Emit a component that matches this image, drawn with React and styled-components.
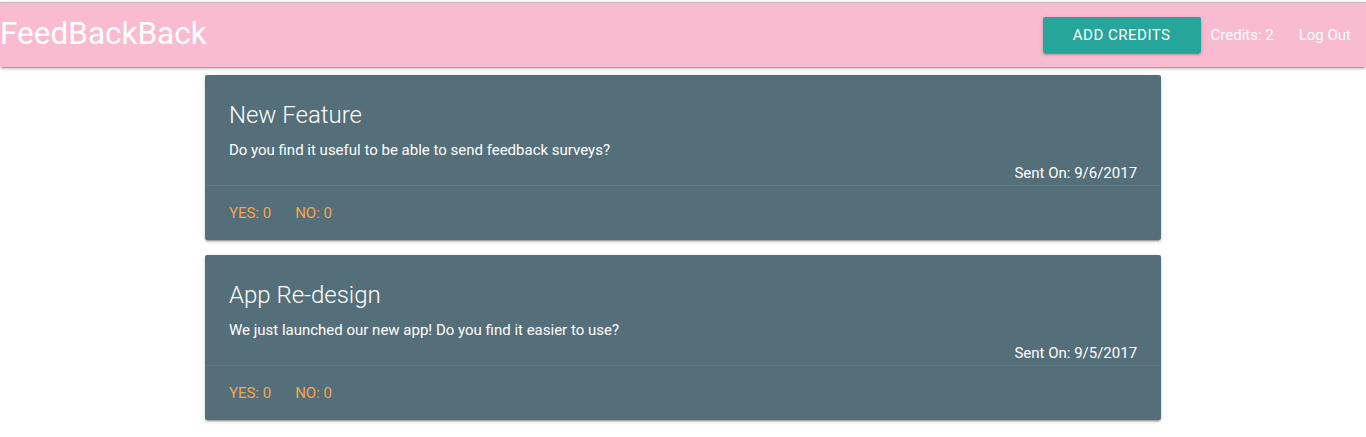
import styled, { createGlobalStyle } from 'styled-components';

const GlobalStyle = createGlobalStyle`
  html { font-size: 15px; }
  body {
    margin: 0;
    padding-top: 2px;
    background: #fff;
    font-family: Roboto, "Liberation Sans", sans-serif;
    font-weight: 400;
    line-height: 1.5;
    color: rgba(0, 0, 0, 0.87);
  }
  * { box-sizing: border-box; }
`;

const Nav = styled.nav`
  height: 65px;
  background: #f8bbd0;
  border-top: 1px solid #c4b3b9;
  box-shadow: 0 2px 2px 0 rgba(0,0,0,0.14), 0 1px 5px 0 rgba(0,0,0,0.12), 0 3px 1px -2px rgba(0,0,0,0.2);
  display: flex;
  align-items: center;
  justify-content: space-between;
  color: #fff;
`;

const Brand = styled.a`
  font-size: 31.5px;
  line-height: 64px;
  color: #fff;
  text-decoration: none;
  margin-top: -2px;
`;

const Menu = styled.ul`
  display: flex;
  align-items: center;
  list-style: none;
  margin: 0;
  padding: 0;
  height: 64px;
`;

const Item = styled.li`
  margin: ${p => p.$margin || '0'};
  font-size: 15px;
  color: #fff;
`;

const NavLink = styled.a`
  display: block;
  padding: 0 15px;
  color: #fff;
  text-decoration: none;
`;

const Button = styled.button`
  height: 36px;
  line-height: 36px;
  padding: 0 30px;
  border: none;
  border-radius: 2px;
  background: #26a69a;
  color: #fff;
  font-family: inherit;
  font-size: 15px;
  letter-spacing: 0.5px;
  text-transform: uppercase;
  box-shadow: 0 2px 2px 0 rgba(0,0,0,0.14), 0 1px 5px 0 rgba(0,0,0,0.12), 0 3px 1px -2px rgba(0,0,0,0.2);
  cursor: pointer;
`;

const Container = styled.div`
  width: 70%;
  margin: 0 auto;
`;

const Card = styled.div`
  background: #546e7a;
  color: #fff;
  margin: 8px 0 15px;
  border-radius: 2px;
  box-shadow: 0 2px 2px 0 rgba(0,0,0,0.14), 0 1px 5px 0 rgba(0,0,0,0.12), 0 3px 1px -2px rgba(0,0,0,0.2);
`;

const Content = styled.div`
  padding: 24px 24px 23.5px;
`;

const Title = styled.span`
  display: block;
  font-size: 24px;
  font-weight: 300;
  line-height: 32px;
  margin-bottom: 8px;
`;

const Text = styled.p`
  margin: 0;
  font-size: 15px;
  line-height: 22.5px;
`;

const Sent = styled.p`
  margin: 0;
  float: right;
  font-size: 15px;
  line-height: 22.5px;
`;

const Action = styled.div`
  border-top: 1px solid rgba(160, 160, 160, 0.2);
  padding: 16px 24px;
  display: flex;
  gap: 24px;
  line-height: 22px;
`;

const Count = styled.a`
  color: #f6a54c;
  text-transform: uppercase;
  font-size: 15px;
  text-decoration: none;
`;

const surveys = [
  { title: 'New Feature', body: 'Do you find it useful to be able to send feedback surveys?', date: '9/6/2017', yes: 0, no: 0 },
  { title: 'App Re-design', body: 'We just launched our new app! Do you find it easier to use?', date: '9/5/2017', yes: 0, no: 0 },
];

function App() {
  return (
    <>
      <GlobalStyle />
      <Nav>
        <Brand href="#">FeedBackBack</Brand>
        <Menu>
          <Item><Button>Add Credits</Button></Item>
          <Item $margin="0 10px">Credits: 2</Item>
          <Item><NavLink href="#">Log Out</NavLink></Item>
        </Menu>
      </Nav>
      <Container>
        {surveys.map(s => (
          <Card key={s.title}>
            <Content>
              <Title>{s.title}</Title>
              <Text>{s.body}</Text>
              <Sent>Sent On: {s.date}</Sent>
            </Content>
            <Action>
              <Count href="#">Yes: {s.yes}</Count>
              <Count href="#">No: {s.no}</Count>
            </Action>
          </Card>
        ))}
      </Container>
    </>
  );
}

export default App;
